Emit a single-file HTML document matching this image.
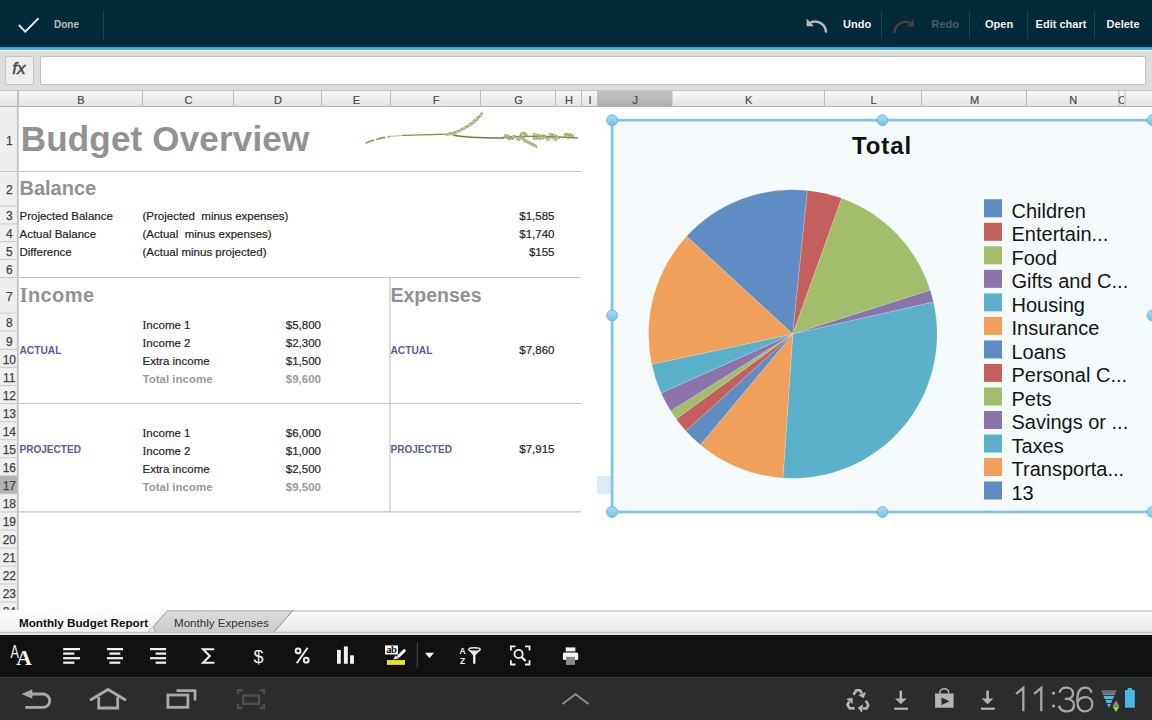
<!DOCTYPE html><html><head><meta charset="utf-8"><style>
html,body{margin:0;padding:0;width:1152px;height:720px;overflow:hidden;background:#fff;position:relative;font-family:"Liberation Sans", sans-serif}
.t{position:absolute;white-space:pre;font-family:"Liberation Sans", sans-serif}
</style></head><body><div style="position:absolute;left:0px;top:0px;width:1152px;height:47px;background:#032a3b"></div><svg style="position:absolute;left:0;top:0" width="1152" height="47">
<polyline points="18.8,25 25.3,31.6 38.5,18.3" fill="none" stroke="#e6e6e6" stroke-width="2"/>
<line x1="103.5" y1="10.5" x2="103.5" y2="39" stroke="#224251" stroke-width="1"/>
<line x1="881.5" y1="11" x2="881.5" y2="38.5" stroke="#224251" stroke-width="1"/>
<line x1="969.5" y1="11" x2="969.5" y2="38.5" stroke="#224251" stroke-width="1"/>
<line x1="1027.5" y1="11" x2="1027.5" y2="38.5" stroke="#224251" stroke-width="1"/>
<line x1="1094.5" y1="11" x2="1094.5" y2="38.5" stroke="#224251" stroke-width="1"/>
<path d="M811.2,22.2 A11,11 0 0 1 826,31.6" fill="none" stroke="#b9b9b9" stroke-width="2.5" stroke-linecap="round"/>
<polygon points="806.6,18.6 806.6,26.2 813.9,26.2" fill="#b9b9b9"/>
<path d="M909.4,22.6 A11,11 0 0 0 894.6,32" fill="none" stroke="#4d3c36" stroke-width="2.5" stroke-linecap="round"/>
<polygon points="914,19 914,26.6 906.7,26.6" fill="#4d3c36"/>
</svg><div class="t" style="left:54px;top:19.93px;font-size:10px;line-height:10px;color:#b9bfc2;font-weight:700;">Done</div><div class="t" style="left:843px;top:19.29px;font-size:11px;line-height:11px;color:#f2f2f2;font-weight:700;">Undo</div><div class="t" style="left:931.5px;top:19.29px;font-size:11px;line-height:11px;color:#4b5d66;font-weight:700;">Redo</div><div class="t" style="left:985px;top:19.29px;font-size:11px;line-height:11px;color:#f2f2f2;font-weight:700;">Open</div><div class="t" style="left:1035.6px;top:19.29px;font-size:11px;line-height:11px;color:#f2f2f2;font-weight:700;">Edit chart</div><div class="t" style="left:1106.6px;top:19.29px;font-size:11px;line-height:11px;color:#f2f2f2;font-weight:700;">Delete</div><div style="position:absolute;left:0px;top:46.7px;width:1152px;height:3.6px;background:linear-gradient(#2ba7d6,#3cb9e6)"></div><div style="position:absolute;left:0px;top:50.5px;width:1152px;height:1.5px;background:#ebe1dc"></div><div style="position:absolute;left:0px;top:52px;width:1152px;height:38px;background:#dddddd"></div><div style="position:absolute;left:5px;top:55.5px;width:28.5px;height:29px;background:#ededed;border:1px solid #c4c4c4;box-sizing:border-box;border-radius:1px"></div><div class="t" style="left:12.3px;top:60.41px;font-size:17px;line-height:17px;color:#4a4a4a;font-weight:400;font-style:italic;-webkit-text-stroke:0.5px #4a4a4a;">fx</div><div style="position:absolute;left:39.5px;top:55.5px;width:1106px;height:29px;background:#fff;border:1px solid #c0c0c0;box-sizing:border-box;border-radius:1px"></div><div style="position:absolute;left:0px;top:90px;width:1152px;height:17px;background:linear-gradient(#f7f7f7,#e3e3e3);border-top:1px solid #c6c6c6;border-bottom:1px solid #b4b4b4;box-sizing:border-box"></div><div style="position:absolute;left:597px;top:91px;width:74.5px;height:15px;background:linear-gradient(#c4c4c4,#aeaeae)"></div><svg style="position:absolute;left:0;top:90" width="1152" height="17"><line x1="18.5" y1="0" x2="18.5" y2="17" stroke="#bdbdbd" stroke-width="1"/><line x1="142.5" y1="0" x2="142.5" y2="17" stroke="#bdbdbd" stroke-width="1"/><line x1="233.5" y1="0" x2="233.5" y2="17" stroke="#bdbdbd" stroke-width="1"/><line x1="321.5" y1="0" x2="321.5" y2="17" stroke="#bdbdbd" stroke-width="1"/><line x1="390.5" y1="0" x2="390.5" y2="17" stroke="#bdbdbd" stroke-width="1"/><line x1="480.5" y1="0" x2="480.5" y2="17" stroke="#bdbdbd" stroke-width="1"/><line x1="555.5" y1="0" x2="555.5" y2="17" stroke="#bdbdbd" stroke-width="1"/><line x1="581.5" y1="0" x2="581.5" y2="17" stroke="#bdbdbd" stroke-width="1"/><line x1="597.5" y1="0" x2="597.5" y2="17" stroke="#bdbdbd" stroke-width="1"/><line x1="672.0" y1="0" x2="672.0" y2="17" stroke="#bdbdbd" stroke-width="1"/><line x1="824.5" y1="0" x2="824.5" y2="17" stroke="#bdbdbd" stroke-width="1"/><line x1="921.5" y1="0" x2="921.5" y2="17" stroke="#bdbdbd" stroke-width="1"/><line x1="1026.5" y1="0" x2="1026.5" y2="17" stroke="#bdbdbd" stroke-width="1"/><line x1="1118.8" y1="0" x2="1118.8" y2="17" stroke="#bdbdbd" stroke-width="1"/><line x1="1125.1" y1="0" x2="1125.1" y2="17" stroke="#bdbdbd" stroke-width="1"/></svg><div class="t" style="left:-219.0px;width:600px;text-align:center;top:94.69px;font-size:11px;line-height:11px;color:#4a4a4a;font-weight:400;-webkit-text-stroke:0.2px #4a4a4a;">B</div><div class="t" style="left:-111.5px;width:600px;text-align:center;top:94.69px;font-size:11px;line-height:11px;color:#4a4a4a;font-weight:400;-webkit-text-stroke:0.2px #4a4a4a;">C</div><div class="t" style="left:-22.0px;width:600px;text-align:center;top:94.69px;font-size:11px;line-height:11px;color:#4a4a4a;font-weight:400;-webkit-text-stroke:0.2px #4a4a4a;">D</div><div class="t" style="left:56.5px;width:600px;text-align:center;top:94.69px;font-size:11px;line-height:11px;color:#4a4a4a;font-weight:400;-webkit-text-stroke:0.2px #4a4a4a;">E</div><div class="t" style="left:136.0px;width:600px;text-align:center;top:94.69px;font-size:11px;line-height:11px;color:#4a4a4a;font-weight:400;-webkit-text-stroke:0.2px #4a4a4a;">F</div><div class="t" style="left:218.5px;width:600px;text-align:center;top:94.69px;font-size:11px;line-height:11px;color:#4a4a4a;font-weight:400;-webkit-text-stroke:0.2px #4a4a4a;">G</div><div class="t" style="left:269.0px;width:600px;text-align:center;top:94.69px;font-size:11px;line-height:11px;color:#4a4a4a;font-weight:400;-webkit-text-stroke:0.2px #4a4a4a;">H</div><div class="t" style="left:290.0px;width:600px;text-align:center;top:94.69px;font-size:11px;line-height:11px;color:#4a4a4a;font-weight:400;-webkit-text-stroke:0.2px #4a4a4a;">I</div><div class="t" style="left:335.25px;width:600px;text-align:center;top:94.69px;font-size:11px;line-height:11px;color:#4a4a4a;font-weight:400;-webkit-text-stroke:0.2px #4a4a4a;">J</div><div class="t" style="left:448.75px;width:600px;text-align:center;top:94.69px;font-size:11px;line-height:11px;color:#4a4a4a;font-weight:400;-webkit-text-stroke:0.2px #4a4a4a;">K</div><div class="t" style="left:573.5px;width:600px;text-align:center;top:94.69px;font-size:11px;line-height:11px;color:#4a4a4a;font-weight:400;-webkit-text-stroke:0.2px #4a4a4a;">L</div><div class="t" style="left:674.5px;width:600px;text-align:center;top:94.69px;font-size:11px;line-height:11px;color:#4a4a4a;font-weight:400;-webkit-text-stroke:0.2px #4a4a4a;">M</div><div class="t" style="left:773.1500000000001px;width:600px;text-align:center;top:94.69px;font-size:11px;line-height:11px;color:#4a4a4a;font-weight:400;-webkit-text-stroke:0.2px #4a4a4a;">N</div><div class="t" style="left:1118px;top:94.69px;font-size:11px;line-height:11px;color:#4a4a4a;font-weight:400;width:6px;overflow:hidden;">C</div><div style="position:absolute;left:0px;top:107px;width:18px;height:503px;background:#efefef"></div><div style="position:absolute;left:0px;top:475.8px;width:18px;height:18px;background:#b3b3b3"></div><svg style="position:absolute;left:0;top:0" width="20" height="610"><line x1="0" y1="171.5" x2="18" y2="171.5" stroke="#c9c9c9" stroke-width="1"/><line x1="0" y1="206" x2="18" y2="206" stroke="#c9c9c9" stroke-width="1"/><line x1="0" y1="224" x2="18" y2="224" stroke="#c9c9c9" stroke-width="1"/><line x1="0" y1="241.5" x2="18" y2="241.5" stroke="#c9c9c9" stroke-width="1"/><line x1="0" y1="259.4" x2="18" y2="259.4" stroke="#c9c9c9" stroke-width="1"/><line x1="0" y1="277.5" x2="18" y2="277.5" stroke="#c9c9c9" stroke-width="1"/><line x1="0" y1="313.1" x2="18" y2="313.1" stroke="#c9c9c9" stroke-width="1"/><line x1="0" y1="331.1" x2="18" y2="331.1" stroke="#c9c9c9" stroke-width="1"/><line x1="0" y1="349.3" x2="18" y2="349.3" stroke="#c9c9c9" stroke-width="1"/><line x1="0" y1="367.4" x2="18" y2="367.4" stroke="#c9c9c9" stroke-width="1"/><line x1="0" y1="385.5" x2="18" y2="385.5" stroke="#c9c9c9" stroke-width="1"/><line x1="0" y1="403.5" x2="18" y2="403.5" stroke="#c9c9c9" stroke-width="1"/><line x1="0" y1="421.6" x2="18" y2="421.6" stroke="#c9c9c9" stroke-width="1"/><line x1="0" y1="439.7" x2="18" y2="439.7" stroke="#c9c9c9" stroke-width="1"/><line x1="0" y1="457.7" x2="18" y2="457.7" stroke="#c9c9c9" stroke-width="1"/><line x1="0" y1="475.8" x2="18" y2="475.8" stroke="#c9c9c9" stroke-width="1"/><line x1="0" y1="493.8" x2="18" y2="493.8" stroke="#c9c9c9" stroke-width="1"/><line x1="0" y1="511.9" x2="18" y2="511.9" stroke="#c9c9c9" stroke-width="1"/><line x1="0" y1="530" x2="18" y2="530" stroke="#c9c9c9" stroke-width="1"/><line x1="0" y1="548" x2="18" y2="548" stroke="#c9c9c9" stroke-width="1"/><line x1="0" y1="566" x2="18" y2="566" stroke="#c9c9c9" stroke-width="1"/><line x1="0" y1="584" x2="18" y2="584" stroke="#c9c9c9" stroke-width="1"/><line x1="0" y1="602" x2="18" y2="602" stroke="#c9c9c9" stroke-width="1"/><line x1="0" y1="620" x2="18" y2="620" stroke="#c9c9c9" stroke-width="1"/><line x1="17.8" y1="90" x2="17.8" y2="610" stroke="#c2c2c2" stroke-width="1.8"/></svg><div class="t" style="left:-290.7px;width:600px;text-align:center;top:134.59px;font-size:12px;line-height:12px;color:#444;font-weight:400;-webkit-text-stroke:0.25px #444;">1</div><div class="t" style="left:-290.7px;width:600px;text-align:center;top:184.09px;font-size:12px;line-height:12px;color:#444;font-weight:400;-webkit-text-stroke:0.25px #444;">2</div><div class="t" style="left:-290.7px;width:600px;text-align:center;top:210.34px;font-size:12px;line-height:12px;color:#444;font-weight:400;-webkit-text-stroke:0.25px #444;">3</div><div class="t" style="left:-290.7px;width:600px;text-align:center;top:228.09px;font-size:12px;line-height:12px;color:#444;font-weight:400;-webkit-text-stroke:0.25px #444;">4</div><div class="t" style="left:-290.7px;width:600px;text-align:center;top:245.79px;font-size:12px;line-height:12px;color:#444;font-weight:400;-webkit-text-stroke:0.25px #444;">5</div><div class="t" style="left:-290.7px;width:600px;text-align:center;top:263.79px;font-size:12px;line-height:12px;color:#444;font-weight:400;-webkit-text-stroke:0.25px #444;">6</div><div class="t" style="left:-290.7px;width:600px;text-align:center;top:290.64px;font-size:12px;line-height:12px;color:#444;font-weight:400;-webkit-text-stroke:0.25px #444;">7</div><div class="t" style="left:-290.7px;width:600px;text-align:center;top:317.44px;font-size:12px;line-height:12px;color:#444;font-weight:400;-webkit-text-stroke:0.25px #444;">8</div><div class="t" style="left:-290.7px;width:600px;text-align:center;top:335.54px;font-size:12px;line-height:12px;color:#444;font-weight:400;-webkit-text-stroke:0.25px #444;">9</div><div class="t" style="left:-290.7px;width:600px;text-align:center;top:353.69px;font-size:12px;line-height:12px;color:#444;font-weight:400;-webkit-text-stroke:0.25px #444;">10</div><div class="t" style="left:-290.7px;width:600px;text-align:center;top:371.79px;font-size:12px;line-height:12px;color:#444;font-weight:400;-webkit-text-stroke:0.25px #444;">11</div><div class="t" style="left:-290.7px;width:600px;text-align:center;top:389.84px;font-size:12px;line-height:12px;color:#444;font-weight:400;-webkit-text-stroke:0.25px #444;">12</div><div class="t" style="left:-290.7px;width:600px;text-align:center;top:407.89px;font-size:12px;line-height:12px;color:#444;font-weight:400;-webkit-text-stroke:0.25px #444;">13</div><div class="t" style="left:-290.7px;width:600px;text-align:center;top:425.99px;font-size:12px;line-height:12px;color:#444;font-weight:400;-webkit-text-stroke:0.25px #444;">14</div><div class="t" style="left:-290.7px;width:600px;text-align:center;top:444.04px;font-size:12px;line-height:12px;color:#444;font-weight:400;-webkit-text-stroke:0.25px #444;">15</div><div class="t" style="left:-290.7px;width:600px;text-align:center;top:462.09px;font-size:12px;line-height:12px;color:#444;font-weight:400;-webkit-text-stroke:0.25px #444;">16</div><div class="t" style="left:-290.7px;width:600px;text-align:center;top:480.14px;font-size:12px;line-height:12px;color:#444;font-weight:400;-webkit-text-stroke:0.25px #444;">17</div><div class="t" style="left:-290.7px;width:600px;text-align:center;top:498.19px;font-size:12px;line-height:12px;color:#444;font-weight:400;-webkit-text-stroke:0.25px #444;">18</div><div class="t" style="left:-290.7px;width:600px;text-align:center;top:516.29px;font-size:12px;line-height:12px;color:#444;font-weight:400;-webkit-text-stroke:0.25px #444;">19</div><div class="t" style="left:-290.7px;width:600px;text-align:center;top:534.34px;font-size:12px;line-height:12px;color:#444;font-weight:400;-webkit-text-stroke:0.25px #444;">20</div><div class="t" style="left:-290.7px;width:600px;text-align:center;top:552.34px;font-size:12px;line-height:12px;color:#444;font-weight:400;-webkit-text-stroke:0.25px #444;">21</div><div class="t" style="left:-290.7px;width:600px;text-align:center;top:570.34px;font-size:12px;line-height:12px;color:#444;font-weight:400;-webkit-text-stroke:0.25px #444;">22</div><div class="t" style="left:-290.7px;width:600px;text-align:center;top:588.34px;font-size:12px;line-height:12px;color:#444;font-weight:400;-webkit-text-stroke:0.25px #444;">23</div><div class="t" style="left:-290.7px;width:600px;text-align:center;top:606.34px;font-size:12px;line-height:12px;color:#444;font-weight:400;-webkit-text-stroke:0.25px #444;">24</div><svg style="position:absolute;left:0;top:0" width="1152" height="610"><line x1="18.5" y1="171.5" x2="581" y2="171.5" stroke="#c6c6c6" stroke-width="1.2"/><line x1="18.5" y1="277.5" x2="581" y2="277.5" stroke="#c6c6c6" stroke-width="1.2"/><line x1="18.5" y1="403.5" x2="581" y2="403.5" stroke="#c6c6c6" stroke-width="1.2"/><line x1="18.5" y1="511.9" x2="581" y2="511.9" stroke="#c6c6c6" stroke-width="1.2"/><line x1="390" y1="277.5" x2="390" y2="511.9" stroke="#c6c6c6" stroke-width="1.2"/></svg><div class="t" style="left:20.8px;top:121.37px;font-size:35px;line-height:35px;color:#929292;font-weight:700;letter-spacing:0.18px;">Budget Overview</div><div class="t" style="left:19.5px;top:177.67px;font-size:20px;line-height:20px;color:#929292;font-weight:700;">Balance</div><div class="t" style="left:19.8px;top:285.27px;font-size:20px;line-height:20px;color:#929292;font-weight:700;letter-spacing:0.4px;"><span style="font-family:Liberation Serif">I</span>ncome</div><div class="t" style="left:390.5px;top:285.89px;font-size:19.5px;line-height:19.5px;color:#929292;font-weight:700;">Expenses</div><div class="t" style="left:19.5px;top:211.27px;font-size:11.5px;line-height:11.5px;color:#262626;font-weight:400;-webkit-text-stroke:0.2px #262626;">Projected Balance</div><div class="t" style="left:19.5px;top:229.27px;font-size:11.5px;line-height:11.5px;color:#262626;font-weight:400;-webkit-text-stroke:0.2px #262626;">Actual Balance</div><div class="t" style="left:19.5px;top:247.27px;font-size:11.5px;line-height:11.5px;color:#262626;font-weight:400;-webkit-text-stroke:0.2px #262626;">Difference</div><div class="t" style="left:142.5px;top:211.27px;font-size:11.5px;line-height:11.5px;color:#262626;font-weight:400;-webkit-text-stroke:0.2px #262626;">(Projected  minus expenses)</div><div class="t" style="left:142.5px;top:229.27px;font-size:11.5px;line-height:11.5px;color:#262626;font-weight:400;-webkit-text-stroke:0.2px #262626;">(Actual  minus expenses)</div><div class="t" style="left:142.5px;top:247.27px;font-size:11.5px;line-height:11.5px;color:#262626;font-weight:400;-webkit-text-stroke:0.2px #262626;">(Actual minus projected)</div><div class="t" style="right:597.5px;top:211.27px;font-size:11.5px;line-height:11.5px;color:#262626;font-weight:400;-webkit-text-stroke:0.2px #262626;">$1,585</div><div class="t" style="right:597.5px;top:229.27px;font-size:11.5px;line-height:11.5px;color:#262626;font-weight:400;-webkit-text-stroke:0.2px #262626;">$1,740</div><div class="t" style="right:597.5px;top:247.27px;font-size:11.5px;line-height:11.5px;color:#262626;font-weight:400;-webkit-text-stroke:0.2px #262626;">$155</div><div class="t" style="left:19.5px;top:346.17px;font-size:10.2px;line-height:10.2px;color:#585d97;font-weight:700;">ACTUAL</div><div class="t" style="left:19.5px;top:445.29px;font-size:10.05px;line-height:10.05px;color:#585d97;font-weight:700;">PROJECTED</div><div class="t" style="left:390.5px;top:346.17px;font-size:10.2px;line-height:10.2px;color:#585d97;font-weight:700;">ACTUAL</div><div class="t" style="left:390.5px;top:445.29px;font-size:10.05px;line-height:10.05px;color:#585d97;font-weight:700;">PROJECTED</div><div class="t" style="right:597.5px;top:345.07px;font-size:11.5px;line-height:11.5px;color:#262626;font-weight:400;-webkit-text-stroke:0.2px #262626;">$7,860</div><div class="t" style="right:597.5px;top:444.07px;font-size:11.5px;line-height:11.5px;color:#262626;font-weight:400;-webkit-text-stroke:0.2px #262626;">$7,915</div><div class="t" style="left:142.5px;top:319.67px;font-size:11.5px;line-height:11.5px;color:#262626;font-weight:400;-webkit-text-stroke:0.2px #262626;"><span style="font-family:Liberation Serif">I</span>ncome 1</div><div class="t" style="right:831px;top:319.67px;font-size:11.5px;line-height:11.5px;color:#262626;font-weight:400;-webkit-text-stroke:0.2px #262626;">$5,800</div><div class="t" style="left:142.5px;top:337.72px;font-size:11.5px;line-height:11.5px;color:#262626;font-weight:400;-webkit-text-stroke:0.2px #262626;"><span style="font-family:Liberation Serif">I</span>ncome 2</div><div class="t" style="right:831px;top:337.72px;font-size:11.5px;line-height:11.5px;color:#262626;font-weight:400;-webkit-text-stroke:0.2px #262626;">$2,300</div><div class="t" style="left:142.5px;top:355.77px;font-size:11.5px;line-height:11.5px;color:#262626;font-weight:400;-webkit-text-stroke:0.2px #262626;">Extra income</div><div class="t" style="right:831px;top:355.77px;font-size:11.5px;line-height:11.5px;color:#262626;font-weight:400;-webkit-text-stroke:0.2px #262626;">$1,500</div><div class="t" style="left:142.5px;top:373.82px;font-size:11.5px;line-height:11.5px;color:#9a9a9a;font-weight:700;">Total income</div><div class="t" style="right:831px;top:373.82px;font-size:11.5px;line-height:11.5px;color:#9a9a9a;font-weight:700;">$9,600</div><div class="t" style="left:142.5px;top:427.77px;font-size:11.5px;line-height:11.5px;color:#262626;font-weight:400;-webkit-text-stroke:0.2px #262626;"><span style="font-family:Liberation Serif">I</span>ncome 1</div><div class="t" style="right:831px;top:427.77px;font-size:11.5px;line-height:11.5px;color:#262626;font-weight:400;-webkit-text-stroke:0.2px #262626;">$6,000</div><div class="t" style="left:142.5px;top:445.82px;font-size:11.5px;line-height:11.5px;color:#262626;font-weight:400;-webkit-text-stroke:0.2px #262626;"><span style="font-family:Liberation Serif">I</span>ncome 2</div><div class="t" style="right:831px;top:445.82px;font-size:11.5px;line-height:11.5px;color:#262626;font-weight:400;-webkit-text-stroke:0.2px #262626;">$1,000</div><div class="t" style="left:142.5px;top:463.87px;font-size:11.5px;line-height:11.5px;color:#262626;font-weight:400;-webkit-text-stroke:0.2px #262626;">Extra income</div><div class="t" style="right:831px;top:463.87px;font-size:11.5px;line-height:11.5px;color:#262626;font-weight:400;-webkit-text-stroke:0.2px #262626;">$2,500</div><div class="t" style="left:142.5px;top:481.92px;font-size:11.5px;line-height:11.5px;color:#9a9a9a;font-weight:700;">Total income</div><div class="t" style="right:831px;top:481.92px;font-size:11.5px;line-height:11.5px;color:#9a9a9a;font-weight:700;">$9,500</div><svg style="position:absolute;left:360px;top:108px" width="230" height="50" viewBox="0 0 1152 250">
<g fill="none" stroke-linecap="round">
<path d="M30,175 Q90,150 150,143" stroke="#8a9a55" stroke-width="8" stroke-dasharray="40 18"/>
<path d="M150,142 L215,137" stroke="#c5cfa8" stroke-width="6"/>
<path d="M215,137 L445,131" stroke="#7d8c48" stroke-width="6"/>
<path d="M470,136 Q520,148 720,150" stroke="#6f7f3a" stroke-width="7"/>
<path d="M720,146 Q900,135 1090,150" stroke="#7d8c48" stroke-width="7"/>
<path d="M440,132 Q585,95 605,35" stroke="#9aab65" stroke-width="5"/>
</g>
<g fill="#cbd7a6" stroke="#7f8f4a" stroke-width="3"><ellipse cx="445" cy="130" rx="14" ry="5" transform="rotate(-25 445 130)"/><ellipse cx="465" cy="127" rx="14" ry="5" transform="rotate(-29 465 127)"/><ellipse cx="485" cy="120" rx="14" ry="5" transform="rotate(-34 485 120)"/><ellipse cx="505" cy="110" rx="14" ry="5" transform="rotate(-38 505 110)"/><ellipse cx="525" cy="99" rx="14" ry="5" transform="rotate(-42 525 99)"/><ellipse cx="545" cy="85" rx="14" ry="5" transform="rotate(-47 545 85)"/><ellipse cx="565" cy="70" rx="14" ry="5" transform="rotate(-51 565 70)"/><ellipse cx="585" cy="53" rx="14" ry="5" transform="rotate(-56 585 53)"/><ellipse cx="605" cy="35" rx="14" ry="5" transform="rotate(-60 605 35)"/><ellipse cx="811" cy="145" rx="13" ry="5" transform="rotate(20 811 145)"/><ellipse cx="891" cy="147" rx="9" ry="5" transform="rotate(-40 891 147)"/><ellipse cx="1039" cy="142" rx="10" ry="5" transform="rotate(-40 1039 142)"/><ellipse cx="795" cy="150" rx="15" ry="5" transform="rotate(-40 795 150)"/><ellipse cx="917" cy="140" rx="10" ry="5" transform="rotate(-20 917 140)"/><ellipse cx="946" cy="155" rx="12" ry="5" transform="rotate(-40 946 155)"/><ellipse cx="982" cy="148" rx="10" ry="5" transform="rotate(-30 982 148)"/><ellipse cx="988" cy="145" rx="15" ry="5" transform="rotate(20 988 145)"/><ellipse cx="741" cy="151" rx="13" ry="5" transform="rotate(30 741 151)"/><ellipse cx="974" cy="154" rx="15" ry="5" transform="rotate(35 974 154)"/><ellipse cx="1043" cy="140" rx="12" ry="5" transform="rotate(-40 1043 140)"/><ellipse cx="1058" cy="135" rx="9" ry="5" transform="rotate(20 1058 135)"/><ellipse cx="742" cy="142" rx="14" ry="5" transform="rotate(20 742 142)"/><ellipse cx="878" cy="149" rx="12" ry="5" transform="rotate(20 878 149)"/><ellipse cx="902" cy="139" rx="13" ry="5" transform="rotate(20 902 139)"/><ellipse cx="929" cy="146" rx="14" ry="5" transform="rotate(20 929 146)"/><ellipse cx="1041" cy="132" rx="13" ry="5" transform="rotate(20 1041 132)"/><ellipse cx="958" cy="133" rx="13" ry="5" transform="rotate(20 958 133)"/><ellipse cx="1038" cy="144" rx="14" ry="5" transform="rotate(35 1038 144)"/><ellipse cx="802" cy="154" rx="11" ry="5" transform="rotate(-40 802 154)"/><ellipse cx="827" cy="129" rx="12" ry="5" transform="rotate(35 827 129)"/><ellipse cx="760" cy="151" rx="10" ry="5" transform="rotate(30 760 151)"/><ellipse cx="737" cy="141" rx="15" ry="5" transform="rotate(30 737 141)"/><ellipse cx="770" cy="146" rx="12" ry="5" transform="rotate(-30 770 146)"/><ellipse cx="974" cy="138" rx="13" ry="5" transform="rotate(20 974 138)"/><ellipse cx="810" cy="128" rx="9" ry="5" transform="rotate(-30 810 128)"/><ellipse cx="767" cy="144" rx="12" ry="5" transform="rotate(-20 767 144)"/><ellipse cx="829" cy="135" rx="9" ry="5" transform="rotate(35 829 135)"/><ellipse cx="1063" cy="139" rx="10" ry="5" transform="rotate(20 1063 139)"/><ellipse cx="1035" cy="139" rx="15" ry="5" transform="rotate(30 1035 139)"/><ellipse cx="907" cy="149" rx="14" ry="5" transform="rotate(-40 907 149)"/><ellipse cx="920" cy="148" rx="11" ry="5" transform="rotate(-40 920 148)"/><ellipse cx="877" cy="153" rx="11" ry="5" transform="rotate(-20 877 153)"/><ellipse cx="879" cy="134" rx="13" ry="5" transform="rotate(20 879 134)"/><ellipse cx="820" cy="160" rx="10" ry="4.5" transform="rotate(60 820 160)"/><ellipse cx="832" cy="166" rx="10" ry="4.5" transform="rotate(60 832 166)"/><ellipse cx="844" cy="172" rx="10" ry="4.5" transform="rotate(60 844 172)"/><ellipse cx="856" cy="178" rx="10" ry="4.5" transform="rotate(60 856 178)"/><ellipse cx="868" cy="184" rx="10" ry="4.5" transform="rotate(60 868 184)"/><ellipse cx="880" cy="190" rx="10" ry="4.5" transform="rotate(60 880 190)"/></g>
</svg><div style="position:absolute;left:597px;top:475.5px;width:14px;height:18px;background:#dcebf6"></div><div style="position:absolute;left:612px;top:120.5px;width:540px;height:391.5px;background:#f5fbfc"></div><svg style="position:absolute;left:0;top:0" width="1152" height="720"><path d="M792.8,334 L686.58,236.33 A144.3,144.3 0 0 1 807.38,190.44 Z" fill="#5f8dc3" stroke="#f5fbfc" stroke-width="0.5" stroke-opacity="0.35"/><path d="M792.8,334 L807.38,190.44 A144.3,144.3 0 0 1 841.68,198.23 Z" fill="#c55f5d" stroke="#f5fbfc" stroke-width="0.5" stroke-opacity="0.35"/><path d="M792.8,334 L841.68,198.23 A144.3,144.3 0 0 1 930.27,290.13 Z" fill="#a2be6a" stroke="#f5fbfc" stroke-width="0.5" stroke-opacity="0.35"/><path d="M792.8,334 L930.27,290.13 A144.3,144.3 0 0 1 933.51,302.03 Z" fill="#8b74ac" stroke="#f5fbfc" stroke-width="0.5" stroke-opacity="0.35"/><path d="M792.8,334 L933.51,302.03 A144.3,144.3 0 0 1 782.99,477.97 Z" fill="#5bb1ca" stroke="#f5fbfc" stroke-width="0.5" stroke-opacity="0.35"/><path d="M792.8,334 L782.99,477.97 A144.3,144.3 0 0 1 700.43,444.86 Z" fill="#f0a05b" stroke="#f5fbfc" stroke-width="0.5" stroke-opacity="0.35"/><path d="M792.8,334 L700.43,444.86 A144.3,144.3 0 0 1 685.90,430.93 Z" fill="#5f8dc3" stroke="#f5fbfc" stroke-width="0.5" stroke-opacity="0.35"/><path d="M792.8,334 L685.90,430.93 A144.3,144.3 0 0 1 676.21,419.02 Z" fill="#c55f5d" stroke="#f5fbfc" stroke-width="0.5" stroke-opacity="0.35"/><path d="M792.8,334 L676.21,419.02 A144.3,144.3 0 0 1 670.69,410.89 Z" fill="#a2be6a" stroke="#f5fbfc" stroke-width="0.5" stroke-opacity="0.35"/><path d="M792.8,334 L670.69,410.89 A144.3,144.3 0 0 1 661.08,392.92 Z" fill="#8b74ac" stroke="#f5fbfc" stroke-width="0.5" stroke-opacity="0.35"/><path d="M792.8,334 L661.08,392.92 A144.3,144.3 0 0 1 651.71,364.25 Z" fill="#5bb1ca" stroke="#f5fbfc" stroke-width="0.5" stroke-opacity="0.35"/><path d="M792.8,334 L651.71,364.25 A144.3,144.3 0 0 1 686.58,236.33 Z" fill="#f0a05b" stroke="#f5fbfc" stroke-width="0.5" stroke-opacity="0.35"/><rect x="984" y="199.30" width="18" height="18" fill="#5f8dc3"/><rect x="984" y="222.82" width="18" height="18" fill="#c55f5d"/><rect x="984" y="246.34" width="18" height="18" fill="#a2be6a"/><rect x="984" y="269.86" width="18" height="18" fill="#8b74ac"/><rect x="984" y="293.38" width="18" height="18" fill="#5bb1ca"/><rect x="984" y="316.90" width="18" height="18" fill="#f0a05b"/><rect x="984" y="340.42" width="18" height="18" fill="#5f8dc3"/><rect x="984" y="363.94" width="18" height="18" fill="#c55f5d"/><rect x="984" y="387.46" width="18" height="18" fill="#a2be6a"/><rect x="984" y="410.98" width="18" height="18" fill="#8b74ac"/><rect x="984" y="434.50" width="18" height="18" fill="#5bb1ca"/><rect x="984" y="458.02" width="18" height="18" fill="#f0a05b"/><rect x="984" y="481.54" width="18" height="18" fill="#5f8dc3"/><rect x="612.1" y="120.2" width="545" height="391.8" fill="none" stroke="#86c3e3" stroke-width="2.8"/><circle cx="612.1" cy="120.2" r="5.4" fill="url(#hg)" stroke="#77b5d6" stroke-width="1"/><circle cx="882.4" cy="120.2" r="5.4" fill="url(#hg)" stroke="#77b5d6" stroke-width="1"/><circle cx="1152.5" cy="120.2" r="5.4" fill="url(#hg)" stroke="#77b5d6" stroke-width="1"/><circle cx="612.1" cy="315.5" r="5.4" fill="url(#hg)" stroke="#77b5d6" stroke-width="1"/><circle cx="1152.5" cy="315.5" r="5.4" fill="url(#hg)" stroke="#77b5d6" stroke-width="1"/><circle cx="612.1" cy="512" r="5.4" fill="url(#hg)" stroke="#77b5d6" stroke-width="1"/><circle cx="882.4" cy="512" r="5.4" fill="url(#hg)" stroke="#77b5d6" stroke-width="1"/><circle cx="1152.5" cy="512" r="5.4" fill="url(#hg)" stroke="#77b5d6" stroke-width="1"/><defs><linearGradient id="hg" x1="0" y1="0" x2="0" y2="1"><stop offset="0" stop-color="#a9dcf3"/><stop offset="1" stop-color="#6cc6ee"/></linearGradient></defs></svg><div class="t" style="left:1011.5px;top:200.57px;font-size:20px;line-height:20px;color:#151515;font-weight:400;">Children</div><div class="t" style="left:1011.5px;top:224.09px;font-size:20px;line-height:20px;color:#151515;font-weight:400;">Entertain...</div><div class="t" style="left:1011.5px;top:247.61px;font-size:20px;line-height:20px;color:#151515;font-weight:400;">Food</div><div class="t" style="left:1011.5px;top:271.13px;font-size:20px;line-height:20px;color:#151515;font-weight:400;">Gifts and C...</div><div class="t" style="left:1011.5px;top:294.65px;font-size:20px;line-height:20px;color:#151515;font-weight:400;">Housing</div><div class="t" style="left:1011.5px;top:318.17px;font-size:20px;line-height:20px;color:#151515;font-weight:400;">Insurance</div><div class="t" style="left:1011.5px;top:341.69px;font-size:20px;line-height:20px;color:#151515;font-weight:400;">Loans</div><div class="t" style="left:1011.5px;top:365.21px;font-size:20px;line-height:20px;color:#151515;font-weight:400;">Personal C...</div><div class="t" style="left:1011.5px;top:388.73px;font-size:20px;line-height:20px;color:#151515;font-weight:400;">Pets</div><div class="t" style="left:1011.5px;top:412.25px;font-size:20px;line-height:20px;color:#151515;font-weight:400;">Savings or ...</div><div class="t" style="left:1011.5px;top:435.77px;font-size:20px;line-height:20px;color:#151515;font-weight:400;">Taxes</div><div class="t" style="left:1011.5px;top:459.29px;font-size:20px;line-height:20px;color:#151515;font-weight:400;">Transporta...</div><div class="t" style="left:1011.5px;top:482.81px;font-size:20px;line-height:20px;color:#151515;font-weight:400;">13</div><div class="t" style="left:582px;width:600px;text-align:center;top:134.08px;font-size:24px;line-height:24px;color:#111;font-weight:700;letter-spacing:0.9px;">Total</div><div style="position:absolute;left:0px;top:610px;width:1152px;height:25px;background:linear-gradient(#fcfcfc,#e4e4e4)"></div><svg style="position:absolute;left:0;top:610px" width="1152" height="25">
<defs><linearGradient id="tg" x1="0" y1="0" x2="0" y2="1"><stop offset="0" stop-color="#dcdcdc"/><stop offset="1" stop-color="#cbcbcb"/></linearGradient>
<linearGradient id="ag" x1="0" y1="0" x2="0" y2="1"><stop offset="0" stop-color="#ffffff"/><stop offset="1" stop-color="#f0f0f0"/></linearGradient></defs>
<rect x="292" y="0.3" width="860" height="1.4" fill="#c6c6c6"/>
<path d="M0,0 L167,0 L148,22.2 L0,22.2 Z" fill="url(#ag)"/>
<path d="M167.2,0.9 L292.6,0.9 L274.3,21.8 L157,21.8 Q154,21.8 154,18.5 L154.3,16 Z" fill="url(#tg)"/>
<line x1="167.2" y1="0.8" x2="292.6" y2="0.8" stroke="#c2c2c2" stroke-width="1.6"/>
<line x1="292.6" y1="0.8" x2="274.3" y2="21.8" stroke="#8c8c8c" stroke-width="1"/>
<path d="M167.2,0.8 L154.3,16 L154,18.5 Q154,21.8 157,21.8" fill="none" stroke="#a8a8a8" stroke-width="1"/>
<line x1="167.2" y1="0.8" x2="148" y2="22.2" stroke="#b0b0b0" stroke-width="1"/>
<rect x="0" y="21.8" width="1152" height="1.2" fill="#bdbdbd"/>
<rect x="0" y="23" width="1152" height="2" fill="#e2e2e2"/>
</svg><div class="t" style="left:19px;top:616.50px;font-size:11.7px;line-height:11.7px;color:#111;font-weight:700;">Monthly Budget Report</div><div class="t" style="left:174px;top:616.58px;font-size:11.6px;line-height:11.6px;color:#333;font-weight:400;">Monthly Expenses</div><div style="position:absolute;left:0px;top:635px;width:1152px;height:42px;background:#111111"></div><div style="position:absolute;left:0px;top:677px;width:1152px;height:1px;background:#3c3d3f"></div><div style="position:absolute;left:0px;top:678px;width:1152px;height:42px;background:#2b2c2e"></div><svg style="position:absolute;left:0;top:0" width="1152" height="720">
<g fill="#f2f2f2">
<rect x="63.2" y="648" width="16.8" height="2.2"/><rect x="63.2" y="652.5" width="11.2" height="2.2"/><rect x="63.2" y="657.1" width="16.8" height="2.2"/><rect x="63.2" y="661.6" width="11.2" height="2.2"/>
<rect x="106.9" y="648" width="16.1" height="2.2"/><rect x="109.4" y="652.5" width="10.9" height="2.2"/><rect x="106.9" y="657.1" width="16.1" height="2.2"/><rect x="109.4" y="661.6" width="10.9" height="2.2"/>
<rect x="150" y="648" width="16.1" height="2.2"/><rect x="155.6" y="652.5" width="10.5" height="2.2"/><rect x="150" y="657.1" width="16.1" height="2.2"/><rect x="155.6" y="661.6" width="10.5" height="2.2"/>
<rect x="337" y="649.9" width="3.8" height="13.9"/><rect x="343.9" y="646.4" width="3.9" height="17.4"/><rect x="350.1" y="655.4" width="3.8" height="8.4"/>

<polygon points="425,652.7 434,652.7 429.5,658.2"/>
</g>
<path d="M214.2,649.3 L203,649.3 L209.8,656 L203,662.7 L214.4,662.7" fill="none" stroke="#f2f2f2" stroke-width="2"/>
<text x="258.6" y="663" font-family="Liberation Sans" font-size="18" fill="#f2f2f2" text-anchor="middle">$</text>
<g fill="none" stroke="#f2f2f2" stroke-width="1.9"><circle cx="298.1" cy="650.9" r="2.4"/><circle cx="306.2" cy="660.2" r="2.4"/><line x1="307.6" y1="647.8" x2="296.8" y2="663.2"/></g>
<text x="0" y="0" font-family="Liberation Sans" font-size="17.5" fill="#f2f2f2" text-anchor="middle" transform="translate(14.6,657.9) scale(0.72,1)">A</text>
<text x="24" y="665.3" font-family="Liberation Serif" font-size="21.5" font-weight="700" fill="#f2f2f2" text-anchor="middle">A</text>
<rect x="385" y="645.4" width="12.9" height="9.1" fill="#ffffff"/>
<text x="391.4" y="653" font-family="Liberation Serif" font-size="10.5" font-weight="700" fill="#111" text-anchor="middle" letter-spacing="-0.3">ab</text>
<line x1="398.6" y1="656.3" x2="404.3" y2="650.6" stroke="#f4f4f4" stroke-width="3" stroke-linecap="round"/>
<polygon points="395.8,655.6 398.6,658.4 393,659.6" fill="#f4f4f4"/>
<rect x="387.2" y="660.4" width="17.5" height="4" fill="#f0e400" stroke="#fafad0" stroke-width="0.6"/>
<line x1="417.3" y1="643" x2="417.3" y2="667.7" stroke="#474747" stroke-width="1.2"/>
<text x="462.6" y="654.2" font-family="Liberation Sans" font-size="8.5" font-weight="700" fill="#f2f2f2" text-anchor="middle">A</text>
<text x="462.6" y="664" font-family="Liberation Sans" font-size="8.5" font-weight="700" fill="#f2f2f2" text-anchor="middle">Z</text>
<ellipse cx="474.45" cy="649.5" rx="5.7" ry="1.7" fill="none" stroke="#f2f2f2" stroke-width="1.5"/>
<path d="M468.9,650.4 Q474.45,652.6 480,650.4 L475.4,655.2 L475.4,663.8 L473.1,663.8 L473.1,655.2 Z" fill="#f2f2f2"/>
<g fill="none" stroke="#f2f2f2" stroke-width="1.8">
<path d="M510.9,650.5 V646.3 H515.5 M525,646.3 H529.5 V650.5 M529.5,660.3 V664.5 H525 M515.5,664.5 H510.9 V660.3"/>
<circle cx="518.6" cy="654" r="4.1"/>
<line x1="521.6" y1="657" x2="525.6" y2="661" stroke-width="2.2"/>
</g>
<rect x="565.7" y="647.4" width="9.7" height="4" fill="#f2f2f2"/>
<rect x="562.9" y="652.4" width="15.3" height="7.5" rx="1.5" fill="#f2f2f2"/>
<rect x="566" y="656.8" width="9" height="8.1" fill="#8a8a8a"/>
<g fill="none" stroke="#a9a9a9" stroke-width="2.8">
<path d="M28,694 H43 A6.7,6.7 0 0 1 43,707.4 H25.2"/>
<path d="M90.1,700.3 L108,689.5 L126,700.3"/>
<path d="M98.7,697 V708 H117.7 V697"/>
<path d="M176.5,690.6 H195 V700.5"/>
<rect x="167.9" y="695" width="20" height="12.3"/>
</g>
<polygon points="21.7,694 32.3,689.2 32.3,698.8" fill="#a9a9a9"/>
<g fill="none" stroke="#4d4d4f" stroke-width="2.4">
<path d="M238,694 V690.2 H242.5 M259.5,690.2 H264 V694 M264,704 V708 H259.5 M242.5,708 H238 V704"/>
<rect x="243.2" y="695.5" width="15.8" height="8.3"/>
</g>
<path d="M562.5,704 L575.5,694.3 L588.5,704" fill="none" stroke="#8d8d8d" stroke-width="2"/>
<g fill="#b4b4b4">
<rect x="899.5" y="690.6" width="2.6" height="9"/><polygon points="895,698.5 906.6,698.5 900.8,704.3"/><rect x="894.2" y="707.6" width="13.8" height="2.2"/>
<rect x="986.3" y="690.6" width="2.6" height="9"/><polygon points="981.8,698.5 993.4,698.5 987.6,704.3"/><rect x="981" y="707.6" width="13.8" height="2.2"/>
<path d="M935.1,693.4 H953.6 V707.7 H935.1 Z M941.4,697.6 V704.9 L949.7,701.25 Z" fill-rule="evenodd"/>
</g>
<path d="M940,693.5 V692 A4.3,3.3 0 0 1 948.6,692 V693.5" fill="none" stroke="#b4b4b4" stroke-width="1.5"/>
<defs><g id="rarr"><path d="M853.5,694.75 L856.25,690.3 L860.15,690.3 L861.9,693.4" fill="none" stroke="#b4b4b4" stroke-width="2.7" stroke-linejoin="round"/><polygon points="866,692 863.8,698.2 858.2,695.3" fill="#b4b4b4"/></g></defs>
<use href="#rarr"/><use href="#rarr" transform="rotate(120 858 701.2)"/><use href="#rarr" transform="rotate(240 858 701.2)"/>
<polygon points="1101,690.2 1116.8,690.2 1108.9,707.7" fill="#6f6f6f"/>
<polygon points="1102.8,694.5 1115,694.5 1108.9,707.7" fill="#50b6e8"/>
<g stroke="#2b2c2e" stroke-width="0.9"><line x1="1100" y1="695.5" x2="1118" y2="695.5"/><line x1="1100" y1="699.5" x2="1118" y2="699.5"/><line x1="1100" y1="703.5" x2="1118" y2="703.5"/></g>
<polygon points="1116,700.5 1119.4,706 1112.6,706" fill="#8a8a8a"/>
<polygon points="1112.6,706.5 1119.4,706.5 1116,712" fill="#8fe01c"/>
<rect x="1125" y="690" width="9.8" height="17.7" fill="#4cb5e8"/>
<rect x="1127.7" y="688" width="4.2" height="2.5" fill="#4cb5e8"/>
</svg><svg style="position:absolute;left:0;top:0" width="1152" height="720"><g fill="none" stroke="#a6a6a6" stroke-width="2.3">
<path d="M1023.3,711.3 V688 L1016,693.8"/><path d="M1041.3,711.3 V688 L1034,693.8"/>
<path d="M1059.6,692.8 C1060.4,689.4 1062.8,687.7 1066.4,687.7 C1070.6,687.7 1073,690.2 1073,693.4 C1073,696.9 1070.3,698.9 1066.3,698.9 H1064.8 M1066.3,698.9 C1071,698.9 1074,701.6 1074,705.3 C1074,709.1 1071.1,711.3 1066.7,711.3 C1062.4,711.3 1059.8,709.1 1058.9,705.6"/>
<path d="M1091.6,692.6 C1090.7,689.4 1088.5,687.7 1085.1,687.7 C1079.6,687.7 1077.3,693.2 1077.3,700.4 C1077.3,707.6 1080.1,711.3 1085,711.3 C1089.5,711.3 1092.3,708.3 1092.3,704.1 C1092.3,699.9 1089.5,697.1 1085.3,697.1 C1081.2,697.1 1077.8,699.8 1077.4,703.4"/>
</g><rect x="1052.2" y="691.8" width="2.7" height="2.7" fill="#a6a6a6"/><rect x="1052.2" y="704.7" width="2.7" height="2.7" fill="#a6a6a6"/></svg></body></html>
